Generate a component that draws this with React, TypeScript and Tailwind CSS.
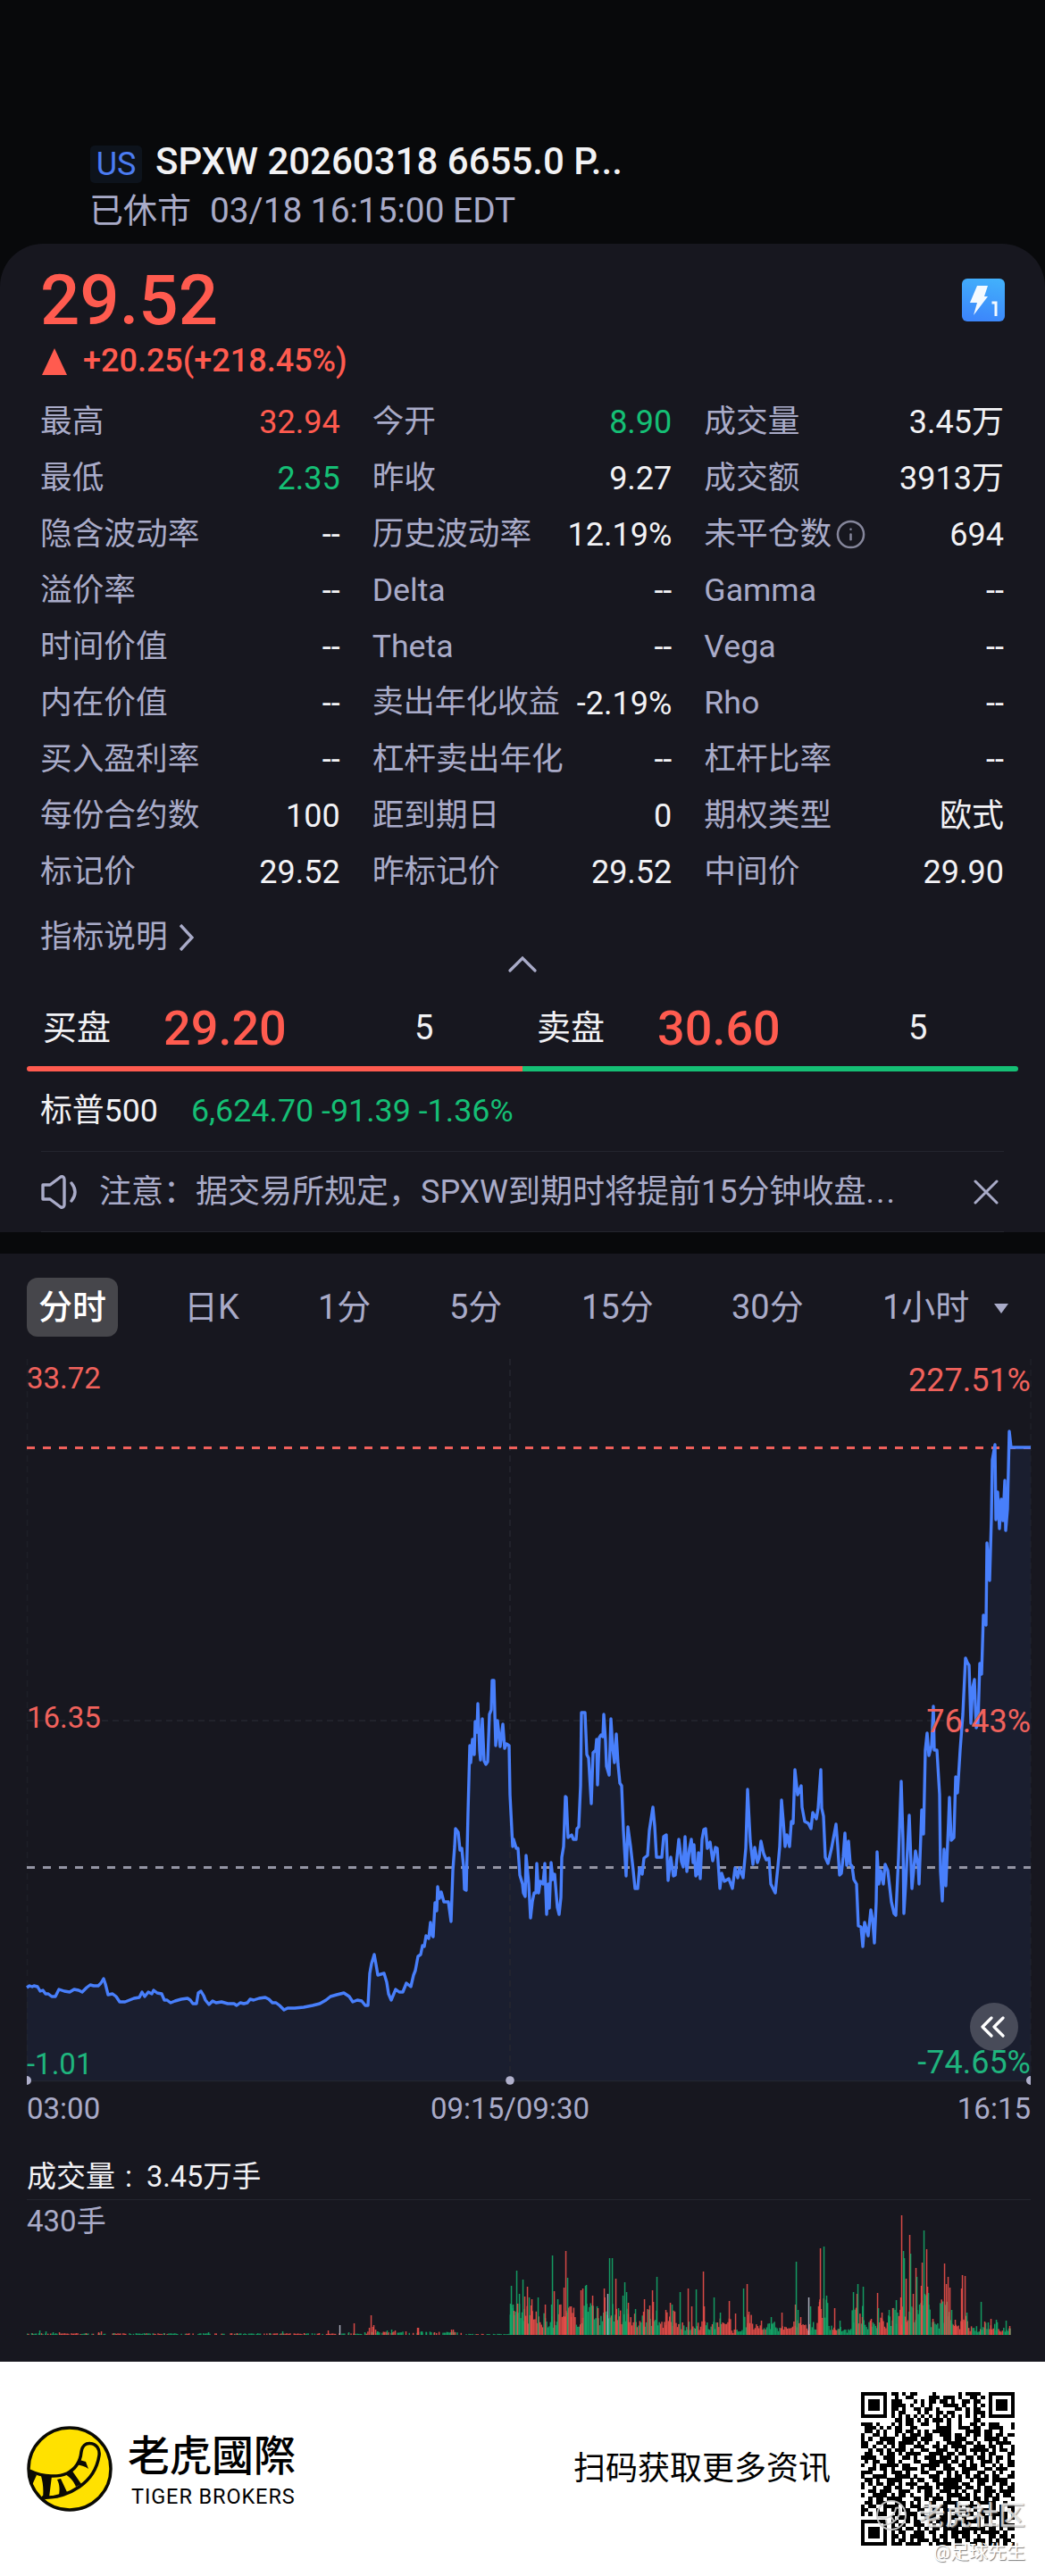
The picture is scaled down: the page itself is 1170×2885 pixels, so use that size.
import type { ReactNode } from "react";
import { Info } from "lucide-react";

type Tone = "up" | "down" | "plain";
type Metric = { label: string; value: string; tone?: Tone; info?: boolean };

const tones: Record<Tone, string> = {
    up: "text-[#ff5b4f]",
    down: "text-[#15bf75]",
    plain: "text-[#f2f2f5]",
};

const metrics: Metric[] = [
    { label: "最高", value: "32.94", tone: "up" },
    { label: "今开", value: "8.90", tone: "down" },
    { label: "成交量", value: "3.45万" },
    { label: "最低", value: "2.35", tone: "down" },
    { label: "昨收", value: "9.27" },
    { label: "成交额", value: "3913万" },
    { label: "隐含波动率", value: "--" },
    { label: "历史波动率", value: "12.19%" },
    { label: "未平仓数", value: "694", info: true },
    { label: "溢价率", value: "--" },
    { label: "Delta", value: "--" },
    { label: "Gamma", value: "--" },
    { label: "时间价值", value: "--" },
    { label: "Theta", value: "--" },
    { label: "Vega", value: "--" },
    { label: "内在价值", value: "--" },
    { label: "卖出年化收益", value: "-2.19%" },
    { label: "Rho", value: "--" },
    { label: "买入盈利率", value: "--" },
    { label: "杠杆卖出年化", value: "--" },
    { label: "杠杆比率", value: "--" },
    { label: "每份合约数", value: "100" },
    { label: "距到期日", value: "0" },
    { label: "期权类型", value: "欧式" },
    { label: "标记价", value: "29.52" },
    { label: "昨标记价", value: "29.52" },
    { label: "中间价", value: "29.90" },
];

// intraday price line, chart coordinates
const LINE =
    "30,2226 33,2224 36,2225 38,2224 42,2225 45,2230 48,2229 51,2233 54,2233 58,2236 62,2236 66,2228 72,2230 78,2231 83,2228 88,2229 92,2231 97,2226 101,2223 105,2224 110,2224 113,2221 116,2216 118,2222 121,2234 126,2233 130,2236 134,2242 140,2242 145,2240 150,2238 156,2237 159,2231 162,2236 166,2231 170,2233 172,2229 176,2232 181,2233 184,2240 187,2240 191,2243 196,2241 203,2239 210,2238 213,2240 216,2244 220,2244 222,2232 225,2230 228,2235 230,2240 234,2245 238,2241 242,2243 248,2242 255,2244 262,2244 265,2246 269,2243 273,2244 277,2243 280,2239 284,2240 290,2238 297,2237 301,2239 305,2243 309,2243 313,2246 318,2251 322,2249 330,2249 340,2248 350,2246 358,2244 365,2240 370,2236 377,2234 385,2232 391,2236 395,2242 400,2240 405,2241 409,2246 412,2246 414,2210 416,2199 419,2189 421,2200 423,2212 430,2210 433,2220 435,2233 438,2240 443,2228 447,2231 451,2231 455,2221 460,2225 463,2212 465,2207 468,2191 471,2189 473,2179 475,2180 477,2168 480,2171 482,2153 484,2168 485,2169 487,2131 489,2140 490,2113 492,2126 494,2119 497,2130 502,2130 505,2152 507,2095 509,2068 510,2048 513,2052 515,2072 517,2070 519,2090 520,2116 522,2117 524,2030 526,1955 527,1974 529,1948 531,1965 532,1928 534,1940 535,1908 537,1960 538,1971 540,1925 542,1972 544,1976 546,1973 548,1920 550,1915 551,1882 553,1882 555,1955 557,1927 560,1956 563,1931 565,1958 567,1953 570,1955 571,2010 574,2068 575,2060 578,2070 580,2070 582,2100 585,2110 586,2120 588,2124 589,2078 592,2110 594,2148 596,2130 598,2120 600,2120 601,2087 603,2120 605,2107 608,2110 610,2087 612,2144 614,2110 615,2137 617,2086 619,2105 621,2099 624,2136 626,2144 628,2125 629,2080 631,2068 633,2012 634,2013 636,2058 640,2055 642,2060 645,2060 646,2048 648,2046 650,2000 651,1918 655,1918 657,1965 659,1969 662,2020 664,1963 667,1960 668,1948 669,1999 671,1946 673,1943 675,1945 676,1920 678,1950 679,1978 682,1988 684,1925 686,1958 688,1974 690,1942 692,1976 694,1997 696,2000 698,2050 701,2101 703,2046 706,2068 709,2095 711,2115 714,2115 716,2092 719,2099 721,2081 725,2078 727,2050 731,2024 733,2045 735,2080 741,2080 743,2057 746,2055 748,2106 751,2080 754,2101 756,2100 760,2060 763,2085 765,2091 767,2057 769,2096 772,2070 774,2060 776,2086 777,2066 779,2101 781,2098 782,2075 784,2104 786,2060 788,2049 790,2048 792,2070 795,2063 798,2084 801,2069 803,2070 806,2115 808,2098 811,2107 816,2104 820,2115 823,2092 826,2103 828,2092 832,2103 835,2070 837,2004 840,2062 843,2088 845,2069 848,2086 850,2080 852,2062 855,2076 858,2083 861,2081 863,2110 868,2120 871,2090 873,2068 875,2016 877,2040 879,2068 881,2055 884,2068 886,2040 888,2042 890,1982 893,2010 897,2000 898,2024 901,2040 905,2042 908,2048 910,2030 914,2037 916,2025 919,1982 920,2025 922,2034 924,2080 927,2087 931,2070 936,2043 938,2068 940,2100 942,2098 944,2080 946,2053 948,2089 950,2062 952,2088 954,2090 956,2105 959,2110 961,2157 964,2158 966,2180 968,2153 972,2168 975,2139 977,2150 979,2176 981,2130 982,2074 984,2110 986,2095 989,2110 991,2088 994,2095 998,2130 1001,2143 1003,2145 1006,2080 1009,1995 1011,2060 1012,2143 1014,2110 1018,2033 1019,2060 1021,2115 1025,2073 1028,2090 1029,2110 1032,2027 1034,2054 1036,1960 1038,1941 1040,1966 1043,1955 1045,1911 1046,1960 1049,1960 1052,2010 1053,2096 1055,2129 1057,2071 1059,2112 1062,2040 1063,2013 1065,2061 1068,2058 1070,1990 1072,2008 1075,1960 1078,1920 1081,1857 1083,1862 1085,1865 1087,1930 1089,1890 1091,1881 1093,1935 1095,1930 1097,1863 1099,1875 1101,1809 1104,1820 1105,1728 1108,1770 1110,1700 1111,1635 1114,1618 1115,1702 1117,1671 1119,1712 1121,1679 1123,1703 1125,1658 1126,1714 1128,1690 1130,1603 1132,1621 1154,1621";

// volume spikes: x, height, colour (r / g / w)
const SPIKES =
    "35,2,g 44,5,g 51,4,g 59,3,g 66,3,r 85,2,r 96,2,r 110,3,r 113,4,r 127,2,g 161,2,g 183,2,g 233,3,g 265,2,r 302,2,g 316,4,g 340,2,r 357,2,r 367,5,r 380,11,w 390,3,g 396,13,r 408,3,g 413,8,r 415,22,r 417,9,r 418,11,r 420,6,r 422,4,g 433,5,g 438,6,g 442,5,r 454,4,r 467,8,r 468,8,r 472,4,g 477,3,g 486,3,r 505,6,r 507,6,r 509,3,r 571,35,g 572,55,g 574,34,g 575,27,r 578,72,g 579,35,r 581,46,g 585,62,g 587,43,r 590,54,r 592,42,g 595,40,r 602,42,g 610,34,r 617,34,g 618,89,g 620,49,r 624,40,g 631,53,r 633,94,r 635,64,g 639,32,r 650,50,r 652,52,r 655,55,g 656,56,g 663,44,r 669,30,r 676,52,r 680,46,w 682,86,g 685,86,g 689,63,r 692,30,g 697,44,g 699,59,g 701,48,g 703,36,r 711,29,g 720,26,r 721,40,r 727,33,r 730,50,r 731,37,r 735,65,g 745,28,r 750,36,r 752,34,g 761,48,g 770,52,r 774,32,r 779,51,g 787,71,r 788,32,r 799,42,g 806,25,g 816,38,r 823,24,r 832,52,g 836,57,r 838,26,r 852,16,r 863,20,g 875,25,r 890,34,r 891,82,g 893,28,g 896,20,r 905,42,w 907,32,g 917,37,r 918,97,r 922,99,g 925,44,g 934,30,r 940,16,g 955,48,g 959,46,r 960,57,g 965,20,r 966,54,g 975,18,r 982,47,r 983,30,g 987,25,r 995,28,g 999,30,r 1003,39,g 1008,42,r 1009,134,r 1011,94,g 1012,86,g 1014,63,r 1018,112,r 1019,91,g 1022,46,r 1025,75,r 1026,65,g 1029,34,g 1031,55,r 1032,81,r 1034,117,g 1037,96,r 1038,54,r 1039,47,g 1044,18,r 1054,35,g 1057,80,r 1059,57,r 1061,65,r 1063,53,r 1065,28,g 1069,17,r 1076,52,r 1077,67,r 1080,66,r 1082,25,g 1098,37,g 1102,15,r 1109,18,r 1115,17,g 1126,16,g 1130,10,r";

// typical bar height from each x onwards
const LEVELS = [
    [30, 1.5], [410, 3], [520, 1], [570, 28], [600, 20], [625, 28], [643, 16], [650, 30], [665, 26],
    [674, 34], [695, 26], [712, 20], [724, 24], [738, 13], [745, 22], [757, 12], [770, 12], [785, 13],
    [800, 16], [818, 5], [832, 20], [842, 11], [855, 14], [867, 8], [888, 14], [900, 12], [915, 34],
    [927, 10], [942, 6], [953, 26], [968, 13], [985, 18], [1000, 26], [1030, 40], [1042, 13],
    [1052, 32], [1065, 14], [1075, 20], [1084, 8], [1100, 12], [1118, 7],
];

const barColors: Record<string, string> = { r: "#ea4f49", g: "#14a768", w: "#b9bccb" };

const volumeBars = () => {
    const bars: { x: number; h: number; c: string }[] = [];
    let seed = 17;
    for (let x = 30; x < 1132; x += 1.45) {
        seed = (seed * 1103515245 + 12345) % 2147483648;
        const rnd = seed / 2147483648;
        const level = LEVELS.filter(([from]) => from <= x).pop()![1];
        if (x < 570 && rnd < 0.35) continue;
        bars.push({ x, h: level * (0.4 + rnd * 0.85), c: (seed >> 9) % 2 ? "r" : "g" });
    }
    SPIKES.split(" ").forEach((s) => {
        const [x, h, c] = s.split(",");
        bars.push({ x: +x, h: +h, c });
    });
    return bars;
};

const QR = [
    "........##.#.##....#......#.####.........",
    ".........#..##....###.###.#..##.#........",
    "........###...#.#.##.##.#..##.##.........",
    "........####.#..#.#...####.#..#.#........",
    "........##.#..##.##.#....##.#.##.........",
    "........#.##...#.#..##.##...#.###........",
    "........#.#.#.#.#.#.#.#.#.#.#.#.#........",
    ".........##.##.#.#.###.#..#...##.........",
    "###.#...#.#.##..##..#..#..#..##.#.###...#",
    ".###.#.#.##..##.....####..###.##..####..#",
    ".##.#.#..##.##.#.#.#####....####.##..#...",
    "#..##.#..#.#.###.##..###.##.#.##.##.##.##",
    "#.#..####..####.###...##.###..#..####.#..",
    "##..##.##.####.#.#..#..####.##.#..#.####.",
    "##.#..#.#.##..###..##.#.####..###.##.#..#",
    "..#.##.#.###.#..##..###..#.#.#####.#.##.#",
    ".##..#.##.#.####..####.##.##..#.#.##...##",
    "####..###..##.#..###.###.#..##.##.#.##.#.",
    ".#.##..##.#...##..#####.##.#.#..###.#..##",
    "#..#.#####.##...#####.##..##.##.#..#.#.##",
    "..##.##.#..####.#.##..###..####..##.###.",
    "###...#.###.#...##..##.#.#.##..##..#.#..#",
    "#..####..####.#...###..#.##.#.##.#.##..##",
    ".##.#..####..#.##..##.#####..#.###.####..",
    "#.#.##.##.#.###..#..######.##..##..#.##.#",
    "#..#..##.##..#.####.#.#####.##.#.##..#.##",
    "..##.###..###..#.##..###.#.#..##.###.####",
    "#..####.#.##.#...##.#..####.#.#..##.#.##.",
    "..#.##.####...##.#.###.#..###.##.#.##...#",
    ".##.###..###.#.#..##..####...#.#####..#..",
    "#.##..####.#.###.#...##..##.###...##.#.##",
    "##..#.#.##.##..##..##.###.##..#.####.#..#",
    "#.#.###..#..###.#.##..#..##.##.##.#####.#",
    "........#.###.#..###.##.##.#..##.#.#.##.#",
    "........##..#.##..#.###..#######.#...##..",
    "........#.##..###..#.##.###.#..#.#.#.####",
    "........###.##.#.#.##.####.######.##.#.##",
    "........#.##..###.##..#.#####.#.#####.#..",
    "........##.#.####..#.##.##.##..#..##.##.#",
    "........#.##.#.###.##.#..##.#.###.#.#.##.",
    "........###.####..#.####.##..##.#.###.#.#",
];

const Finder = ({ x, y }: { x: number; y: number }) => (
    <g>
        <rect x={x} y={y} width="7" height="7" fill="#000" />
        <rect x={x + 1} y={y + 1} width="5" height="5" fill="#fff" />
        <rect x={x + 2} y={y + 2} width="3" height="3" fill="#000" />
    </g>
);

const QrCode = () => (
    <svg viewBox="0 0 41 41" className="size-[172px]" shapeRendering="crispEdges">
        {QR.map((row, y) =>
            [...row].map((cell, x) =>
                cell === "#" ? <rect key={`${x}-${y}`} x={x} y={y} width="1.02" height="1.02" /> : null
            )
        )}
        <Finder x={0} y={0} />
        <Finder x={34} y={0} />
        <Finder x={0} y={34} />
    </svg>
);

const TigerLogo = () => (
    <svg viewBox="0 0 96 96" className="size-24">
        <circle cx="48" cy="48" r="46" fill="#ffe100" stroke="#0a0a05" strokeWidth="3.5" />
        <path
            d="M3 50C20 58 36 57 45 53C55 48 60 39 61 29C62 22 66 19 71 19.5C78 20 82 26 81 33C79 46 72 59 59 68C46 77 33 81 17 80"
            fill="none"
            stroke="#0a0a05"
            strokeWidth="3.5"
        />
        <path d="M2 49L11 55L6 66L2 60Z" fill="#0a0a05" />
        <path d="M16 56L28 56L25 80L18 80C19 71 18 63 16 56Z" fill="#0a0a05" />
        <path d="M34 60L38 59L45 74L36 78C37 71 37 66 34 60Z" fill="#0a0a05" />
        <path d="M43 54L50 49L61 65L55 68C52 61 48 57 43 54Z" fill="#0a0a05" />
        <path d="M55 43L59 38L66 40L69 48C65 45 60 44 55 43Z" fill="#0a0a05" />
    </svg>
);

const LevelBadge = () => (
    <svg viewBox="0 0 48 48" className="size-12">
        <defs>
            <linearGradient id="badge" x1="0.7" y1="0" x2="0.5" y2="1">
                <stop offset="0" stopColor="#42b0fb" />
                <stop offset="1" stopColor="#3c86fb" />
            </linearGradient>
        </defs>
        <rect width="48" height="48" rx="6" fill="url(#badge)" />
        <path d="M17 8H29L25 20H29L13 41L17 27H9Z" fill="#f4faff" />
        <path d="M33.500 27H38V42" fill="none" stroke="#f4faff" strokeWidth="3" />
    </svg>
);

const Quote = ({ name, price, size }: { name: string; price: string; size: string }) => (
    <div className="flex flex-1 items-center">
        <span className="w-[135px] text-[38px] text-[#f2f2f5]">{name}</span>
        <span className="w-[281px] text-[54px] font-medium text-[#ff5b4f]">{price}</span>
        <span className="text-[38px] text-[#f2f2f5]">{size}</span>
    </div>
);

const AxisLabel = ({ className, children }: { className: string; children: ReactNode }) => (
    <span className={`absolute leading-10 ${className}`}>{children}</span>
);

const PriceChart = () => (
    <div className="relative h-[839px]">
        <svg viewBox="0 1497 1170 839" className="block h-[839px] w-full">
            <polygon points={`30,2330 ${LINE} 1154,2330`} fill="#1a1e2f" />
            <g stroke="#262730" strokeWidth="1.5" strokeDasharray="7 5">
                <path d="M571 1522V2330" />
                <path d="M30 1927H1154" />
                <path d="M30.500 1522V2330M1154 1522V2330" strokeOpacity="0.5" />
            </g>
            <path d="M30 2330.500H1154" stroke="#22242f" strokeWidth="1.5" />
            <path d="M30 2091.500H1154" stroke="#9495a4" strokeWidth="3.2" strokeDasharray="9 9" />
            <path d="M30 1621.500H1154" stroke="#f0605b" strokeWidth="3.2" strokeDasharray="9 9" />
            <polyline points={LINE} fill="none" stroke="#487ffb" strokeWidth="3.4" strokeLinejoin="round" />
            <path d="M30 2325A5 5 0 0 1 30 2335ZM1154 2325A5 5 0 0 0 1154 2335Z" fill="#b0b0cc" />
            <circle cx="571" cy="2330" r="4.8" fill="#b0b0cc" />
        </svg>
        <AxisLabel className="left-[30px] top-[27px] text-[33px] text-[#f0625c]">33.72</AxisLabel>
        <AxisLabel className="right-4 top-[29px] text-[36px] text-[#f0625c]">227.51%</AxisLabel>
        <AxisLabel className="left-[30px] top-[407px] text-[33px] text-[#f0625c]">16.35</AxisLabel>
        <AxisLabel className="right-4 top-[411px] text-[36px] text-[#f0625c]">76.43%</AxisLabel>
        <AxisLabel className="left-[30px] top-[795px] text-[33px] text-[#1fb57e]">-1.01</AxisLabel>
        <div className="absolute right-[30px] top-[746px] flex size-[54px] items-center justify-center rounded-full bg-[#484b59]">
            <svg viewBox="0 0 28 24" className="mr-0.5 h-6 w-7" fill="none" stroke="#fff" strokeWidth="3.2" strokeLinecap="round" strokeLinejoin="round">
                <path d="M12 2L2 12L12 22M25 2L15 12L25 22" />
            </svg>
        </div>
        <AxisLabel className="right-4 top-[793px] text-[36px] text-[#1fb57e]">-74.65%</AxisLabel>
    </div>
);

const VolumeChart = () => (
    <div className="relative mx-[30px] mr-4 h-[152px] border-t border-[#24252e]">
        <span className="absolute left-0 top-0 text-[33px] leading-[48px]">430手</span>
        <svg viewBox="30 0 1124 151" className="block h-[151px] w-full">
            {volumeBars().map((bar, i) => (
                <rect key={i} x={bar.x - 0.2} y={151 - bar.h} width="1.5" height={bar.h} fill={barColors[bar.c]} fillOpacity="0.9" />
            ))}
        </svg>
    </div>
);

const App = () => {
    return (
        <div className="w-[1170px] bg-[#08090b] font-['Roboto','Noto_Sans_CJK_SC',sans-serif] text-[#a9abc8]">
            <header className="h-[273px] pl-[101px] pt-[151px]">
                <div className="flex h-[58px] items-center">
                    <span className="mt-[7px] flex h-[42px] w-[58px] items-center justify-center rounded-[5px] bg-[#0d131c] text-[36px] text-[#4b7cf3]">
                        US
                    </span>
                    <h1 className="ml-[15px] whitespace-nowrap text-[42px] font-medium text-[#f2f2f4]">
                        SPXW 20260318 6655.0 P...
                    </h1>
                </div>
                <p className="flex gap-[21px] text-[38px] leading-[54px]">
                    <span className="-ml-px">已休市</span>
                    <span className="text-[38.800px]">03/18 16:15:00 EDT</span>
                </p>
            </header>

            <section className="h-[1107px] rounded-t-[48px] bg-[#17171f] pt-[18px]">
                <div className="flex h-[90px] items-center justify-between pl-[45px] pr-[45px]">
                    <span className="text-[78px] font-medium text-[#ff5b4f]">29.52</span>
                    <LevelBadge />
                </div>
                <div className="flex h-[46px] items-center gap-[18px] pl-[47px] text-[36px] font-medium text-[#ff5b4f]">
                    <svg viewBox="0 0 28 30" className="mt-0.5 h-[30px] w-7">
                        <path d="M14 0L28 30H0Z" fill="currentColor" />
                    </svg>
                    <span>+20.25(+218.45%)</span>
                </div>

                <div className="mx-[46px] mt-[14px] grid grid-cols-3 gap-x-[37px] text-[36px]">
                    {metrics.map((m) => (
                        <div key={m.label} className="flex h-[63px] items-center justify-between whitespace-nowrap">
                            <span className={`-ml-px flex items-center gap-1 ${m.label.length === 6 && m.value !== "--" ? "text-[35px]" : "text-[35.700px]"}`}>
                                {m.label}
                                {m.info && <Info className="size-[35px] text-[#85869b]" strokeWidth={1.7} />}
                            </span>
                            <span className={tones[m.tone ?? "plain"]}>{m.value}</span>
                        </div>
                    ))}
                </div>

                <div className="mt-[17px] flex h-[50px] items-center gap-[13px] pl-[45px] text-[35.700px]">
                    指标说明
                    <svg viewBox="0 0 16 30" className="h-[30px] w-4" fill="none" stroke="currentColor" strokeWidth="3.4">
                        <path d="M1 1L14 15L1 29" />
                    </svg>
                </div>
                <div className="-mt-[11px] flex h-8 items-center justify-center">
                    <svg viewBox="0 0 32 18" className="h-[18px] w-8" fill="none" stroke="currentColor" strokeWidth="3.2" strokeLinecap="round">
                        <path d="M2 16L16 2L30 16" />
                    </svg>
                </div>

                <div className="flex h-[98px] pl-[48px] pr-[16px] pt-[13px]">
                    <Quote name="买盘" price="29.20" size="5" />
                    <Quote name="卖盘" price="30.60" size="5" />
                </div>
                <div className="mx-[30px] flex h-[6px] overflow-hidden rounded-full">
                    <div className="flex-1 bg-[#ff5b4f]" />
                    <div className="flex-1 bg-[#15bf75]" />
                </div>

                <div className="mx-[45px] flex h-[89px] items-center gap-[37px] text-[35.800px]">
                    <span className="text-[#f2f2f5]">标普500</span>
                    <span className="text-[#15bf75]">6,624.70 -91.39 -1.36%</span>
                </div>
                <div className="mx-[46px] flex h-[91px] items-center border-y border-[#24252e] text-[36px]">
                    <svg viewBox="0 0 40 38" className="h-[38px] w-10" fill="none" stroke="currentColor" strokeWidth="3.4" strokeLinejoin="round" strokeLinecap="round">
                        <path d="M2 11H10L22 2Q26 1 26 5V33Q26 37 22 36L10 27H2Z" />
                        <path d="M34 9Q42 19 34 29" />
                    </svg>
                    <span className="ml-[25px] flex-1 whitespace-nowrap">
                        注意：据交易所规定，SPXW到期时将提前15分钟收盘<span className="tracking-[2px]">...</span>
                    </span>
                    <svg viewBox="0 0 28 28" className="mr-[6px] size-7" fill="none" stroke="currentColor" strokeWidth="3" strokeLinecap="round">
                        <path d="M2 2L26 26M26 2L2 26" />
                    </svg>
                </div>
            </section>

            <section className="mt-6 h-[1241px] bg-[#17171f] pt-[27px]">
                <nav className="flex h-[66px] items-center pl-[30px] text-[38px]">
                    <span className="flex h-[66px] w-[102px] items-center justify-center rounded-xl bg-[#46464b] font-medium text-white">
                        分时
                    </span>
                    <span className="ml-[74px] w-[150px]">日K</span>
                    <span className="w-[147px]">1分</span>
                    <span className="w-[148px]">5分</span>
                    <span className="w-[168px]">15分</span>
                    <span className="w-[169px]">30分</span>
                    <span className="w-[125px]">1小时</span>
                    <svg viewBox="0 0 16 11" className="mt-0.5 h-[11px] w-4">
                        <path d="M0 0H16L8 11Z" fill="currentColor" />
                    </svg>
                </nav>
                <PriceChart />
                <div className="relative flex h-[50px] items-center justify-between pl-[30px] pr-4 pt-px text-[33px]">
                    <span>03:00</span>
                    <span className="absolute left-[571px] -translate-x-1/2">09:15/09:30</span>
                    <span>16:15</span>
                </div>
                <div className="mt-[25px] flex h-[52px] items-center gap-[11px] pl-[30px] pt-0.5 text-[33px] text-[#f2f2f5]">
                    <span>成交量</span>
                    <span>:</span>
                    <span className="ml-[5px] text-[32.500px]">3.45万手</span>
                </div>
                <VolumeChart />
            </section>

            <footer className="relative flex h-[240px] items-center bg-white pl-[30px] pr-[34px] text-black">
                <TigerLogo />
                <div className="ml-[17px] mt-1 flex flex-col font-['Roboto','Noto_Sans_CJK_TC',sans-serif]">
                    <span className="text-[47px] font-medium leading-[58px]">老虎國際</span>
                    <span className="pl-[4px] text-[23.500px] leading-8 tracking-[0.9px]">TIGER BROKERS</span>
                </div>
                <span className="ml-auto mr-[34px] text-[36px]">扫码获取更多资讯</span>
                <QrCode />
                <div className="absolute right-[22px] top-[154px] flex items-center gap-3 text-[30px] font-medium leading-9 text-white/70 [text-shadow:1px_1px_1px_rgba(120,120,120,0.7)]">
                    <svg viewBox="0 0 36 36" className="size-9" fill="none" stroke="#cfcfcf" strokeWidth="2" opacity="0.9">
                        <circle cx="18" cy="18" r="16" />
                        <path d="M3 20C14 24 22 18 23 10C28 8 29 14 26 19C22 26 16 29 8 29M12 23L13 29M18 20L21 25" />
                    </svg>
                    老虎社区
                </div>
                <span className="absolute right-[22px] top-[199px] text-[21px] leading-7 text-white [text-shadow:1px_1px_1px_rgba(90,90,90,0.8)]">
                    @足球先生
                </span>
            </footer>
        </div>
    );
};

export default App;
